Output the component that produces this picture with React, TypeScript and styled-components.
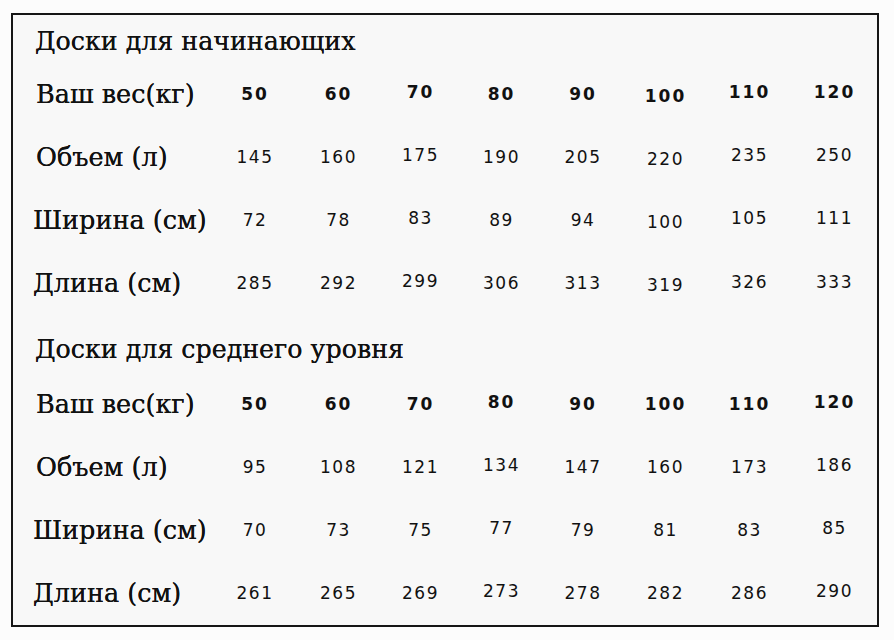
import styled, { createGlobalStyle } from 'styled-components'

type Line = { label: string; values: number[]; shift?: number[]; indent?: number }

type Section = {
  title: string
  lines: Line[]
}

const sections: Section[] = [
  {
    title: 'Доски для начинающих',
    lines: [
      { label: 'Ваш вес(кг)', values: [50, 60, 70, 80, 90, 100, 110, 120], shift: [0, 0, -2, 0, 0, 2, -2, -2] },
      { label: 'Объем (л)', values: [145, 160, 175, 190, 205, 220, 235, 250], shift: [0, 0, -2, 0, 0, 2, -2, -2] },
      { label: 'Ширина (см)', values: [72, 78, 83, 89, 94, 100, 105, 111], shift: [0, 0, -2, 0, 0, 2, -2, -2], indent: 20 },
      { label: 'Длина (см)', values: [285, 292, 299, 306, 313, 319, 326, 333], shift: [0, 0, -2, 0, 0, 2, -1, -1], indent: 20 },
    ],
  },
  {
    title: 'Доски для среднего уровня',
    lines: [
      { label: 'Ваш вес(кг)', values: [50, 60, 70, 80, 90, 100, 110, 120], shift: [0, 0, 0, -2, 0, 0, 0, -2] },
      { label: 'Объем (л)', values: [95, 108, 121, 134, 147, 160, 173, 186], shift: [0, 0, 0, -2, 0, 0, 0, -2] },
      { label: 'Ширина (см)', values: [70, 73, 75, 77, 79, 81, 83, 85], shift: [0, 0, 0, -2, 0, 0, 0, -2], indent: 20 },
      { label: 'Длина (см)', values: [261, 265, 269, 273, 278, 282, 286, 290], shift: [0, 0, 0, -2, 0, 0, 0, -2], indent: 20 },
    ],
  },
]

const GlobalStyle = createGlobalStyle`
  html, body {
    margin: 0;
    padding: 0;
    background: #fcfcfc;
  }
`

const Page = styled.div`
  padding: 13px 0 0 11px;
`

const Board = styled.div`
  width: 864px;
  height: 610px;
  border: 2px solid #151515;
  background: #f8f8f8;
  color: #111;
  display: flex;
  flex-direction: column;
`

const Title = styled.div<{ $h: number }>`
  height: ${(p) => p.$h}px;
  display: flex;
  align-items: flex-end;
  padding: 0 0 ${(p) => (p.$h > 50 ? 8 : 6)}px 22px;
  box-sizing: border-box;
  font-family: 'DejaVu Serif', serif;
  font-size: 25.3px;
  white-space: nowrap;
  text-shadow: 0 0 0.4px #111;
`

const Row = styled.div`
  height: 63px;
  display: grid;
  grid-template-columns: 200px 84px 83px 81px 81px 82px 83px 85px 85px;
  align-items: center;
`

const Label = styled.div<{ $indent: number }>`
  padding-left: ${(p) => p.$indent}px;
  font-family: 'DejaVu Serif', serif;
  font-size: 25.5px;
  white-space: nowrap;
  text-shadow: 0 0 0.4px #111;
`

const Value = styled.div<{ $bold?: boolean }>`
  text-align: center;
  font-family: 'DejaVu Sans', Verdana, sans-serif;
  font-size: 17px;
  font-weight: ${(p) => (p.$bold ? 700 : 400)};
  letter-spacing: ${(p) => (p.$bold ? 2 : 1.5)}px;
`

export default function App() {
  return (
    <>
      <GlobalStyle />
      <Page>
        <Board>
          {sections.map((s, i) => (
            <div key={s.title}>
              <Title $h={i === 0 ? 47 : 58}>{s.title}</Title>
              {s.lines.map((l, k) => (
                <Row key={l.label}>
                  <Label $indent={l.indent ?? 23}>{l.label}</Label>
                  {l.values.map((v, j) => (
                    <Value
                      key={j}
                      $bold={k === 0}
                      style={{ transform: `translateY(${l.shift?.[j] ?? 0}px)` }}>
                      {v}
                    </Value>
                  ))}
                </Row>
              ))}
            </div>
          ))}
        </Board>
      </Page>
    </>
  )
}
